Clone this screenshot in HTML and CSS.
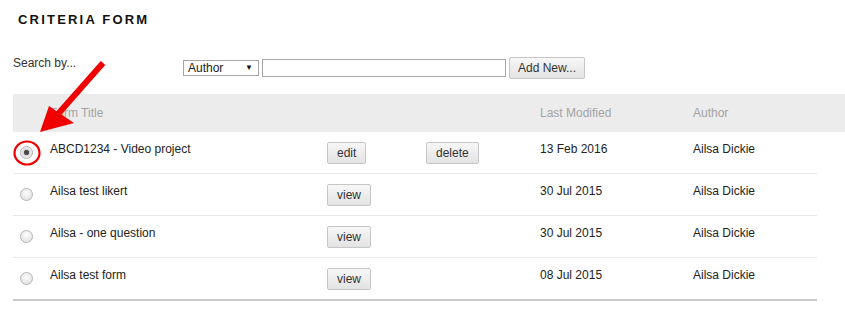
FILE: index.html
```html
<!DOCTYPE html>
<html lang="en">
<head>
  <meta charset="UTF-8" />
  <title>Criteria Form</title>
  <link rel="stylesheet" href="styles.css">
</head>
<body>
  <h1 class="title">CRITERIA FORM</h1>

  <!-- search bar -->
  <div class="search">
    <span class="search-label">Search by...</span>
    <span class="select-wrap">
      <select class="search-select">
        <option>Author</option>
        <option>Form Title</option>
      </select>
    </span>
    <input type="text" class="search-input" />
    <button class="btn btn-add">Add New...</button>
  </div>

  <!-- form list -->
  <div class="list">
    <div class="head">
      <span></span>
      <span>Form Title</span>
      <span></span>
      <span></span>
      <span>Last Modified</span>
      <span>Author</span>
    </div>

    <div class="row">
      <span><input type="radio" name="form" class="radio" checked /></span>
      <span class="cell">ABCD1234 - Video project</span>
      <span><button class="btn">edit</button></span>
      <span><button class="btn">delete</button></span>
      <span class="cell">13 Feb 2016</span>
      <span class="cell">Ailsa Dickie</span>
    </div>
    <div class="row">
      <span><input type="radio" name="form" class="radio" /></span>
      <span class="cell">Ailsa test likert</span>
      <span><button class="btn">view</button></span>
      <span></span>
      <span class="cell">30 Jul 2015</span>
      <span class="cell">Ailsa Dickie</span>
    </div>
    <div class="row">
      <span><input type="radio" name="form" class="radio" /></span>
      <span class="cell">Ailsa - one question</span>
      <span><button class="btn">view</button></span>
      <span></span>
      <span class="cell">30 Jul 2015</span>
      <span class="cell">Ailsa Dickie</span>
    </div>
    <div class="row last">
      <span><input type="radio" name="form" class="radio" /></span>
      <span class="cell">Ailsa test form</span>
      <span><button class="btn">view</button></span>
      <span></span>
      <span class="cell">08 Jul 2015</span>
      <span class="cell">Ailsa Dickie</span>
    </div>
  </div>

  <!-- annotation drawn over the screenshot -->
  <svg class="annotation" width="845" height="318" viewBox="0 0 845 318">
    <ellipse cx="27" cy="153" rx="12.5" ry="11.5" fill="none" stroke="#f00000" stroke-width="2.2" />
    <line x1="103" y1="63" x2="58" y2="114" stroke="#f00000" stroke-width="6" />
    <polygon points="40,132 49,106 74,123" fill="#f00000" />
  </svg>
</body>
</html>
```

FILE: styles.css
```css
body {
  margin: 0;
  padding: 0;
  background: #fff;
  font-family: "Liberation Sans", Arial, sans-serif;
  font-size: 12px;
  color: #222;
  position: relative;
}
.title {
  margin: 0;
  padding: 12px 0 0 18px;
  font-size: 13px;
  line-height: 16px;
  font-weight: bold;
  letter-spacing: 2.2px;
  color: #111;
}
.search {
  display: flex;
  align-items: flex-start;
  margin-top: 27px;
  padding-left: 13px;
  height: 26px;
}
.search-label {
  width: 170px;
  line-height: 14px;
  color: #333;
  padding-top: 1px;
  margin-right: 0;
  flex: none;
  box-sizing: border-box;
  width: 170px;
}
.select-wrap {
  position: relative;
  margin-top: 5px;
}
.select-wrap::after {
  content: "\25BC";
  position: absolute;
  right: 6px;
  top: 3px;
  font-size: 8px;
  line-height: 10px;
  color: #111;
  pointer-events: none;
}
.search-select {
  appearance: none;
  -webkit-appearance: none;
  width: 76px;
  height: 16px;
  border: 1px solid #a6a6a6;
  border-radius: 0;
  background: #fff;
  padding: 0 4px;
  font-family: inherit;
  font-size: 12px;
  line-height: 14px;
  color: #222;
  display: block;
}
.search-input {
  margin: 4px 0 0 3px;
  width: 244px;
  height: 18px;
  box-sizing: border-box;
  border: 1px solid #a6a6a6;
  padding: 0 3px;
  font-family: inherit;
  font-size: 12px;
}
.btn {
  height: 22px;
  padding: 0 9px;
  border: 1px solid #c6c6c6;
  border-radius: 2px;
  background: linear-gradient(#f7f7f7, #e3e3e3);
  font-family: inherit;
  font-size: 12px;
  color: #333;
  cursor: pointer;
}
.btn-add {
  margin: 2px 0 0 3px;
  width: 76px;
  padding: 0;
}
.list {
  margin: 13px 0 0 13px;
}
.head,
.row {
  display: grid;
  grid-template-columns: 37px 277px 99px 114px 153px 1fr;
}
.head {
  height: 38px;
  line-height: 39px;
  background: #ececec;
  color: #a3a3a3;
}
.row {
  width: 804px;
  height: 31px;
  padding-top: 10px;
  border-bottom: 1px solid #e8e8e8;
}
.row.last {
  border-bottom: 2px solid #cacaca;
}
.cell {
  line-height: 14px;
}
.radio {
  appearance: none;
  -webkit-appearance: none;
  margin: 4px 0 0 7px;
  width: 13px;
  height: 13px;
  border: 1px solid #b4b4b4;
  border-radius: 50%;
  background: radial-gradient(circle at 50% 35%, #fdfdfd, #dcdcdc);
  box-sizing: border-box;
  display: block;
}
.radio:checked {
  background: radial-gradient(circle, #444 0, #555 2.5px, #d8d8d8 3px, #f4f4f4 6px);
}
.annotation {
  position: absolute;
  top: 0;
  left: 0;
  pointer-events: none;
}
```
